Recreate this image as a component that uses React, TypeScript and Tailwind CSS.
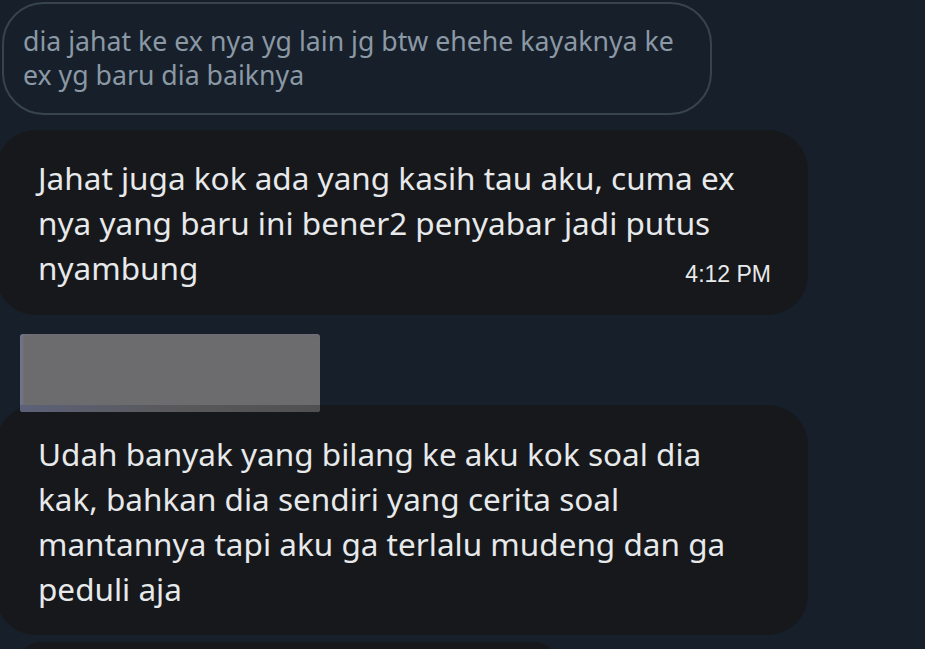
import React from 'react';

const font = { fontFamily: '"Noto Sans", "Open Sans", sans-serif' };

const App: React.FC = () => {
  return (
    <div className="w-[925px] h-[649px] overflow-hidden bg-[#17202a]" style={font}>
      <div className="flex flex-col pt-[2px]">
        {/* quoted message */}
        <div className="ml-[2px] w-[710px] h-[113px] rounded-[42px] border-2 border-[#38444d] pl-[19px] pt-[20px]">
          <p className="text-[26.7px] leading-[34px] text-[#8b98a5]">
            dia jahat ke ex nya yg lain jg btw ehehe kayaknya ke
            <br />
            ex yg baru dia baiknya
          </p>
        </div>

        {/* reply */}
        <div className="mt-[15px] -ml-[4px] w-[812px] h-[185px] rounded-[40px] bg-[#16181c] pl-[42px] pr-[37px] pt-[25px] flex flex-col text-[31.5px] leading-[45px] text-[#e7e9ea]">
          <p className="whitespace-nowrap">Jahat juga kok ada yang kasih tau aku, cuma ex</p>
          <p className="whitespace-nowrap">nya yang baru ini bener2 penyabar jadi putus</p>
          <div className="flex items-baseline justify-between">
            <span>nyambung</span>
            <span
              className="text-[23px] translate-y-[2px] text-[#e7e9ea]"
              style={{ fontFamily: '"Liberation Sans", Arial, sans-serif' }}
            >
              4:12 PM
            </span>
          </div>
        </div>

        {/* censored box */}
        <div className="relative z-10 mt-[19px] ml-[20px] w-[300px] h-[78px] rounded-[3px] bg-[#6c6c6e] flex flex-col justify-end overflow-hidden shadow-[inset_3px_0_3px_rgba(130,140,210,0.3)]">
          <div className="h-[7px] bg-gradient-to-r from-[#5d6178] via-[#59595c] to-[#505052]" />
        </div>

        {/* second reply */}
        <div className="-mt-[7px] -ml-[4px] w-[812px] h-[230px] rounded-[40px] bg-[#16181c] pl-[42px] pt-[26px] text-[31.5px] leading-[45px] text-[#e7e9ea]">
          <p className="whitespace-nowrap">Udah banyak yang bilang ke aku kok soal dia</p>
          <p className="whitespace-nowrap">kak, bahkan dia sendiri yang cerita soal</p>
          <p className="whitespace-nowrap">mantannya tapi aku ga terlalu mudeng dan ga</p>
          <p className="whitespace-nowrap">peduli aja</p>
        </div>

        <div className="mt-[7px] ml-[20px] w-[535px] h-[40px] rounded-[30px] bg-[#16181c]" />
      </div>
    </div>
  );
};

export default App;
